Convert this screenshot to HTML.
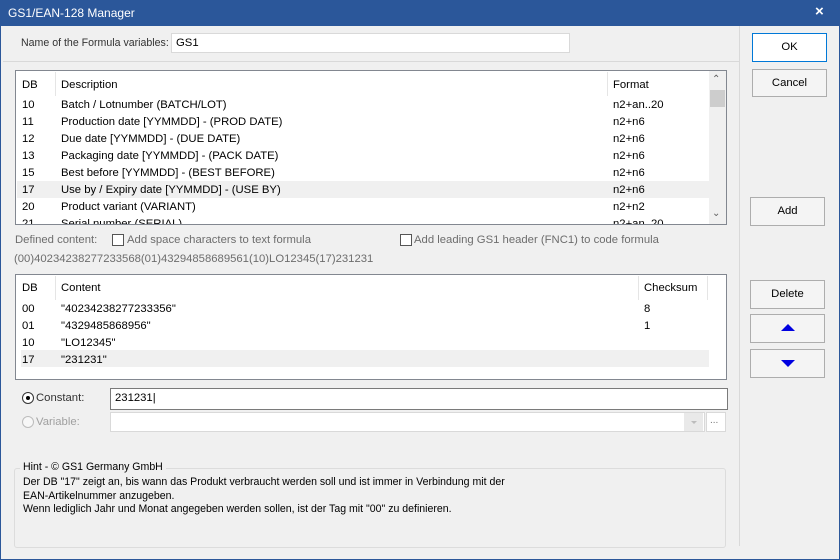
<!DOCTYPE html>
<html><head><meta charset="utf-8"><style>
*{margin:0;padding:0;box-sizing:border-box}
body{width:840px;height:560px;background:#f0f0f0;position:relative;overflow:hidden;font-family:"Liberation Sans",sans-serif;font-size:11.3px;color:#000}
.a{position:absolute}
.t{position:absolute;white-space:nowrap;line-height:14px;font-size:11.3px}
.box{position:absolute;background:#fff;border:1px solid #828790}
.btn{position:absolute;border:1px solid #adadad;text-align:center;font-size:11.3px;line-height:26px;background:#f4f4f4}
.cb{position:absolute;width:12px;height:12px;border:1px solid #333;background:#fff}
.sel{position:absolute;background:#f0f0f0}
.sep{position:absolute;width:1px;background:#e5e5e5}
.g{color:#6d6d6d}
.h{position:absolute;white-space:nowrap;font-size:11px;line-height:13.5px;transform:scaleX(0.96);transform-origin:left;color:#000}
</style></head><body>
<div class="a" style="left:0;top:0;width:840px;height:26px;background:#2b579a"></div>
<div class="t" style="left:8px;top:6px;color:#fff;font-size:12px">GS1/EAN-128 Manager</div>
<div class="t" style="left:815px;top:5px;color:#fff;font-size:15px;font-weight:bold">×</div>
<div class="a" style="left:0;top:26px;width:1px;height:534px;background:#2b579a"></div>
<div class="a" style="left:839px;top:26px;width:1px;height:534px;background:#2b579a"></div>
<div class="a" style="left:0;top:559px;width:840px;height:1px;background:#2b579a"></div>
<div class="a" style="left:739px;top:26px;width:1px;height:520px;background:#d9d9d9"></div>
<div class="a" style="left:3px;top:61px;width:736px;height:1px;background:#d9d9d9"></div>

<div class="t" style="left:21px;top:36px;font-size:10.6px;color:#333">Name of the Formula variables:</div>
<div class="box" style="left:171px;top:33px;width:399px;height:20px;border-color:#d9d9d9"></div>
<div class="t" style="left:176px;top:36px">GS1</div>

<div class="btn" style="left:752px;top:33px;width:75px;height:29px;border:1px solid #0078d7;background:#fff">OK</div>
<div class="btn" style="left:752px;top:69px;width:75px;height:28px">Cancel</div>
<div class="btn" style="left:750px;top:197px;width:75px;height:29px">Add</div>
<div class="btn" style="left:750px;top:280px;width:75px;height:29px">Delete</div>
<div class="btn" style="left:750px;top:314px;width:75px;height:29px"></div>
<div class="a" style="left:781px;top:324px;border-left:7px solid transparent;border-right:7px solid transparent;border-bottom:7px solid #0000e0"></div>
<div class="btn" style="left:750px;top:349px;width:75px;height:29px"></div>
<div class="a" style="left:781px;top:360px;border-left:7px solid transparent;border-right:7px solid transparent;border-top:7px solid #0000e0"></div>

<!-- list 1 -->
<div class="box" style="left:15px;top:70px;width:712px;height:155px;overflow:hidden">
<div class="sep" style="left:39px;top:1px;height:24px"></div>
<div class="sep" style="left:591px;top:1px;height:24px"></div>
<div class="sel" style="left:1px;top:110px;width:692px;height:17px"></div>
<div class="t" style="left:6px;top:7px">DB</div><div class="t" style="left:45px;top:7px">Description</div><div class="t" style="left:597px;top:7px">Format</div>
<div class="t" style="left:6px;top:27px">10</div><div class="t" style="left:45px;top:27px">Batch / Lotnumber (BATCH/LOT)</div><div class="t" style="left:597px;top:27px">n2+an..20</div>
<div class="t" style="left:6px;top:44px">11</div><div class="t" style="left:45px;top:44px">Production date [YYMMDD] - (PROD DATE)</div><div class="t" style="left:597px;top:44px">n2+n6</div>
<div class="t" style="left:6px;top:61px">12</div><div class="t" style="left:45px;top:61px">Due date [YYMMDD] - (DUE DATE)</div><div class="t" style="left:597px;top:61px">n2+n6</div>
<div class="t" style="left:6px;top:78px">13</div><div class="t" style="left:45px;top:78px">Packaging date [YYMMDD] - (PACK DATE)</div><div class="t" style="left:597px;top:78px">n2+n6</div>
<div class="t" style="left:6px;top:95px">15</div><div class="t" style="left:45px;top:95px">Best before [YYMMDD] - (BEST BEFORE)</div><div class="t" style="left:597px;top:95px">n2+n6</div>
<div class="t" style="left:6px;top:112px">17</div><div class="t" style="left:45px;top:112px">Use by / Expiry date [YYMMDD] - (USE BY)</div><div class="t" style="left:597px;top:112px">n2+n6</div>
<div class="t" style="left:6px;top:129px">20</div><div class="t" style="left:45px;top:129px">Product variant (VARIANT)</div><div class="t" style="left:597px;top:129px">n2+n2</div>
<div class="t" style="left:6px;top:146px">21</div><div class="t" style="left:45px;top:146px">Serial number (SERIAL)</div><div class="t" style="left:597px;top:146px">n2+an..20</div>
<div class="a" style="left:693px;top:0;width:17px;height:153px;background:#f0f0f0"></div>
<div class="a" style="left:694px;top:19px;width:15px;height:17px;background:#cdcdcd"></div>
<div class="t" style="left:696px;top:2px;font-size:10px;color:#606060">&#8963;</div>
<div class="t" style="left:696px;top:136px;font-size:10px;color:#606060">&#8964;</div>
</div>

<div class="t g" style="left:15px;top:233px">Defined content:</div>
<div class="cb" style="left:112px;top:234px;border-color:#555"></div>
<div class="t g" style="left:127px;top:233px">Add space characters to text formula</div>
<div class="cb" style="left:400px;top:234px;border-color:#555"></div>
<div class="t g" style="left:414px;top:233px">Add leading GS1 header (FNC1) to code formula</div>
<div class="t g" style="left:14px;top:252px">(00)40234238277233568(01)43294858689561(10)LO12345(17)231231</div>

<!-- list 2 -->
<div class="box" style="left:15px;top:274px;width:712px;height:106px;overflow:hidden">
<div class="sep" style="left:39px;top:1px;height:24px"></div>
<div class="sep" style="left:622px;top:1px;height:24px"></div>
<div class="sep" style="left:691px;top:1px;height:24px"></div>
<div class="sel" style="left:5px;top:75px;width:688px;height:17px"></div>
<div class="t" style="left:6px;top:6px">DB</div><div class="t" style="left:45px;top:6px">Content</div><div class="t" style="left:628px;top:6px">Checksum</div>
<div class="t" style="left:6px;top:27px">00</div><div class="t" style="left:45px;top:27px">"40234238277233356"</div><div class="t" style="left:628px;top:27px">8</div>
<div class="t" style="left:6px;top:44px">01</div><div class="t" style="left:45px;top:44px">"4329485868956"</div><div class="t" style="left:628px;top:44px">1</div>
<div class="t" style="left:6px;top:61px">10</div><div class="t" style="left:45px;top:61px">"LO12345"</div>
<div class="t" style="left:6px;top:78px">17</div><div class="t" style="left:45px;top:78px">"231231"</div>
</div>

<div class="a" style="left:22px;top:392px;width:12px;height:12px;border:1px solid #333;border-radius:50%;background:#fff"></div>
<div class="a" style="left:26px;top:396px;width:4px;height:4px;border-radius:50%;background:#000"></div>
<div class="t" style="left:36px;top:391px;color:#333">Constant:</div>
<div class="box" style="left:110px;top:388px;width:618px;height:22px;border-color:#7a7a7a"></div>
<div class="t" style="left:115px;top:391px">231231|</div>
<div class="a" style="left:22px;top:416px;width:12px;height:12px;border:1px solid #bcbcbc;border-radius:50%;background:#f7f7f7"></div>
<div class="t" style="left:36px;top:415px;color:#a0a0a0">Variable:</div>
<div class="box" style="left:110px;top:412px;width:595px;height:20px;border-color:#d9d9d9"></div>
<div class="a" style="left:684px;top:413px;width:19px;height:18px;background:#e9e9e9"></div>
<div class="a" style="left:691px;top:421px;border-left:3px solid transparent;border-right:3px solid transparent;border-top:3px solid #bcbcbc"></div>
<div class="box" style="left:706px;top:412px;width:20px;height:20px;border-color:#d9d9d9"></div>
<div class="t" style="left:710px;top:414px;color:#777;font-size:10px">...</div>

<div class="a" style="left:14px;top:468px;width:712px;height:80px;border:1px solid #dcdcdc;border-radius:3px"></div>
<div class="a" style="left:20px;top:462px;width:146px;height:12px;background:#f0f0f0"></div>
<div class="h" style="left:23px;top:461px">Hint - © GS1 Germany GmbH</div>
<div class="h" style="left:23px;top:476px">Der DB "17" zeigt an, bis wann das Produkt verbraucht werden soll und ist immer in Verbindung mit der</div>
<div class="h" style="left:23px;top:489.5px">EAN-Artikelnummer anzugeben.</div>
<div class="h" style="left:23px;top:503px">Wenn lediglich Jahr und Monat angegeben werden sollen, ist der Tag mit "00" zu definieren.</div>
</body></html>
